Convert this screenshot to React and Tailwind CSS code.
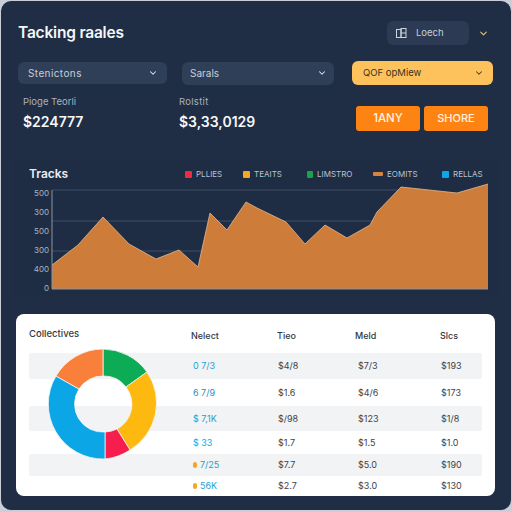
import React from "react";
import { ChevronDown } from "lucide-react";

const legend = [
  ["PLLIES", "bg-[#ee2a45] w-[7px] h-[7px]", "w-[58px]"],
  ["TEAITS", "bg-[#f6a623] w-[7px] h-[7px]", "w-[64px]"],
  ["LIMSTRO", "bg-[#16a34a] w-[6px] h-[7px]", "w-[66px]"],
  ["EOMITS", "bg-[#d9843c] w-[10px] h-[4px]", "w-[69px]"],
  ["RELLAS", "bg-[#0ea5e9] w-[7px] h-[7px]", ""],
];

const rows = [
  ["0 7/3", "$4/8", "$7/3", "$193", "h-[26px] bg-[#f2f3f4]", "text-[#1aa3dc]", ""],
  ["6 7/9", "$1.6", "$4/6", "$173", "h-[27px]", "text-[#1f8fc4]", ""],
  ["$ 7,1K", "$/98", "$123", "$1/8", "h-[25px] bg-[#f2f3f4]", "text-[#2a9cc9]", ""],
  ["$ 33", "$1.7", "$1.5", "$1.0", "h-[23px]", "text-[#1aa3dc]", ""],
  ["7/25", "$7.7", "$5.0", "$190", "h-[22px] bg-[#f2f3f4]", "text-[#2a9cc9]", "bg-[#f6a623]"],
  ["56K", "$2.7", "$3.0", "$130", "h-[19px]", "text-[#2a9cc9]", "bg-[#f6a623]"],
];

const ticks = ["500", "300", "500", "300", "400", "0"];

export default function App() {
  return (
    <div className="w-[512px] h-[512px] bg-[#c9ced8] pt-[1px] pl-[1px] pr-[1px] pb-[2px] font-['Inter','Liberation_Sans',sans-serif]">
      <div className="h-full rounded-[10px] bg-[#1f2e44] flex flex-col">
        {/* header */}
        <div className="flex items-center h-[24px] mt-[20px] pl-[17px] pr-[22px]">
          <h1 className="text-[15.5px] font-semibold text-[#f4f6f8] tracking-[-0.2px] leading-none">Tacking raales</h1>
          <div className="ml-auto flex items-center w-[82px] h-[24px] rounded-[6px] bg-[#2c3b53] pl-[9px] gap-[9px]">
            <svg width="11" height="11" viewBox="0 0 11 11" fill="none" stroke="#cfd5de" strokeWidth="1">
              <rect x="0.5" y="1.5" width="4.5" height="8" />
              <rect x="5" y="0.5" width="5" height="9" />
              <path d="M5 5h5" />
            </svg>
            <span className="text-[9.5px] text-[#c8ced8]">Loech</span>
          </div>
          <ChevronDown className="ml-[9px] text-[#e8c468]" size={11} strokeWidth={2.5} />
        </div>

        {/* filters */}
        <div className="flex mt-[16px] pl-[17px] pr-[18px] h-[24px] items-center">
          <div className="w-[149px] h-[22px] rounded-[6px] bg-[#2f3f58] flex items-center justify-between pl-[10px] pr-[9px]">
            <span className="text-[10px] tracking-[0.4px] text-[#c8ced8]">Stenictons</span>
            <ChevronDown className="text-[#e6e9ee]" size={10} strokeWidth={2.5} />
          </div>
          <div className="w-[152px] h-[23px] ml-[15px] rounded-[6px] bg-[#2f3f58] flex items-center justify-between pl-[8px] pr-[7px]">
            <span className="text-[10px] text-[#c8ced8]">Sarals</span>
            <ChevronDown className="text-[#e6e9ee]" size={10} strokeWidth={2.5} />
          </div>
          <div className="w-[141px] h-[24px] ml-[18px] rounded-[6px] bg-[#fdc25c] flex items-center justify-between pl-[11px] pr-[9px]">
            <span className="text-[9.5px] text-[#3a3320]">QOF opMiew</span>
            <ChevronDown className="text-[#4a3d20]" size={10} strokeWidth={2.5} />
          </div>
        </div>

        {/* stats and buttons */}
        <div className="flex mt-[11px] pl-[22px] pr-[23px] h-[35px]">
          <div className="w-[156px]">
            <div className="text-[9.5px] leading-[11px] text-[#a9b2bf]">Pioge Teorli</div>
            <div className="mt-[7px] text-[14px] leading-[15px] font-semibold text-[#f6f7f9]">$224777</div>
          </div>
          <div>
            <div className="text-[9.5px] tracking-[0.3px] leading-[11px] text-[#a9b2bf]">Rolstit</div>
            <div className="mt-[7px] text-[14px] leading-[15px] font-semibold text-[#f6f7f9] whitespace-nowrap">$3,33,0129</div>
          </div>
          <div className="ml-auto flex gap-[4px] mt-[10px] h-[25px]">
            <div className="w-[64px] rounded-[3px] bg-[#fd8412] flex items-center justify-center text-[11.5px] font-medium text-[#fdf1e0]">1ANY</div>
            <div className="w-[64px] rounded-[3px] bg-[#fd8412] flex items-center justify-center text-[11px] font-medium text-[#fdf1e0]">SHORE</div>
          </div>
        </div>

        {/* chart */}
        <div className="mt-[29px] mx-[13px] h-[137px] rounded-[8px] bg-[#1e2d43] flex flex-col">
          <div className="flex items-center h-[16px] mt-[6px] pl-[15px]">
            <span className="text-[12px] font-semibold text-[#e9edf2] w-[156px]">Tracks</span>
            <div className="flex items-center">
              {legend.map(([t, c, w]) => (
                <div key={t} className={`flex items-center gap-[4px] ${w}`}>
                  <span className={`${c} rounded-[1px]`} />
                  <span className="text-[8px] text-[#b9c2cf]">{t}</span>
                </div>
              ))}
            </div>
          </div>
          <div className="flex items-start mt-[7px] h-[101px]">
            <div className="w-[38px] h-[103px] pl-[17px] flex flex-col justify-between text-[8px] leading-[8px] text-[#aab3c0] text-right pr-[3px]">
              {ticks.map((t, i) => (
                <span key={i}>{t}</span>
              ))}
            </div>
            <svg width="436" height="101" viewBox="51 190 436 101" className="block overflow-visible">
              <path d="M51 191H400M51 222H487M51 252H487" stroke="#3f4e65" strokeWidth="1" fill="none" />
              <path
                d="M51 266L77 246L102 218L128 245L155 260L178 251L197 268L209 214L226 231L245 203L256 209L285 223L304 245L324 226L346 239L369 226L376 213L400 188L428 191L456 194L487 185V290H51Z"
                fill="#cd7c3a"
                stroke="none"
              />
              <path
                d="M51 266L77 246L102 218L128 245L155 260L178 251L197 268L209 214L226 231L245 203L256 209L285 223L304 245L324 226L346 239L369 226L376 213L400 188L428 191L456 194L487 185"
                fill="none"
                stroke="#e7b78e"
                strokeWidth="0.8"
              />
              <path d="M51 191V290H487" stroke="#8a95a5" strokeWidth="1" fill="none" />
            </svg>
          </div>
        </div>

        {/* table card */}
        <div className="relative mt-[17px] ml-[15px] w-[479px] h-[182px] rounded-[8px] bg-white pt-[13px] px-[13px]">
          <div className="relative flex items-start h-[26px] text-[9px] font-medium text-[#33383f]">
            <span className="text-[9.5px] leading-[14px]">Collectives</span>
          </div>
          <div className="absolute top-[15px] left-[175px] right-[13px] grid grid-cols-[86px_78px_85px_1fr] text-[9px] font-medium text-[#33383f]">
            <span>Nelect</span>
            <span>Tieo</span>
            <span>Meld</span>
            <span>Slcs</span>
          </div>
          {rows.map(([a, b, c, d, rowCls, aCls, dot]) => (
            <div key={a} className={`${rowCls} rounded-[2px] grid grid-cols-[85px_80px_83px_1fr] pl-[164px] items-center text-[9px] text-[#3d434b]`}>
              <span className={`${aCls} flex items-center gap-[3px]`}>
                {dot && <span className={`${dot} w-[4px] h-[6px] rounded-full`} />}
                {a}
              </span>
              <span>{b}</span>
              <span>{c}</span>
              <span>{d}</span>
            </div>
          ))}
          <svg width="112" height="112" viewBox="47 348 112 112" className="absolute left-[31px] top-[34px]">
            <g stroke="#f4f5f6" strokeWidth="0.8">
              <path d="M103 349A55 55 0 0 1 147 372L126 387A28 28 0 0 0 103 376Z" fill="#0dab55" />
              <path d="M147 372A55 55 0 0 1 130 450L117 429A28 28 0 0 0 126 387Z" fill="#fdb90f" />
              <path d="M130 450A55 55 0 0 1 105 459L105 432A28 28 0 0 0 117 429Z" fill="#f61e4c" />
              <path d="M105 459A55 55 0 0 1 56 376L79 389A28 28 0 0 0 105 432Z" fill="#0ba6e6" />
              <path d="M56 376A55 55 0 0 1 103 349L103 376A28 28 0 0 0 79 389Z" fill="#f8803a" />
            </g>
          </svg>
        </div>
      </div>
    </div>
  );
}
